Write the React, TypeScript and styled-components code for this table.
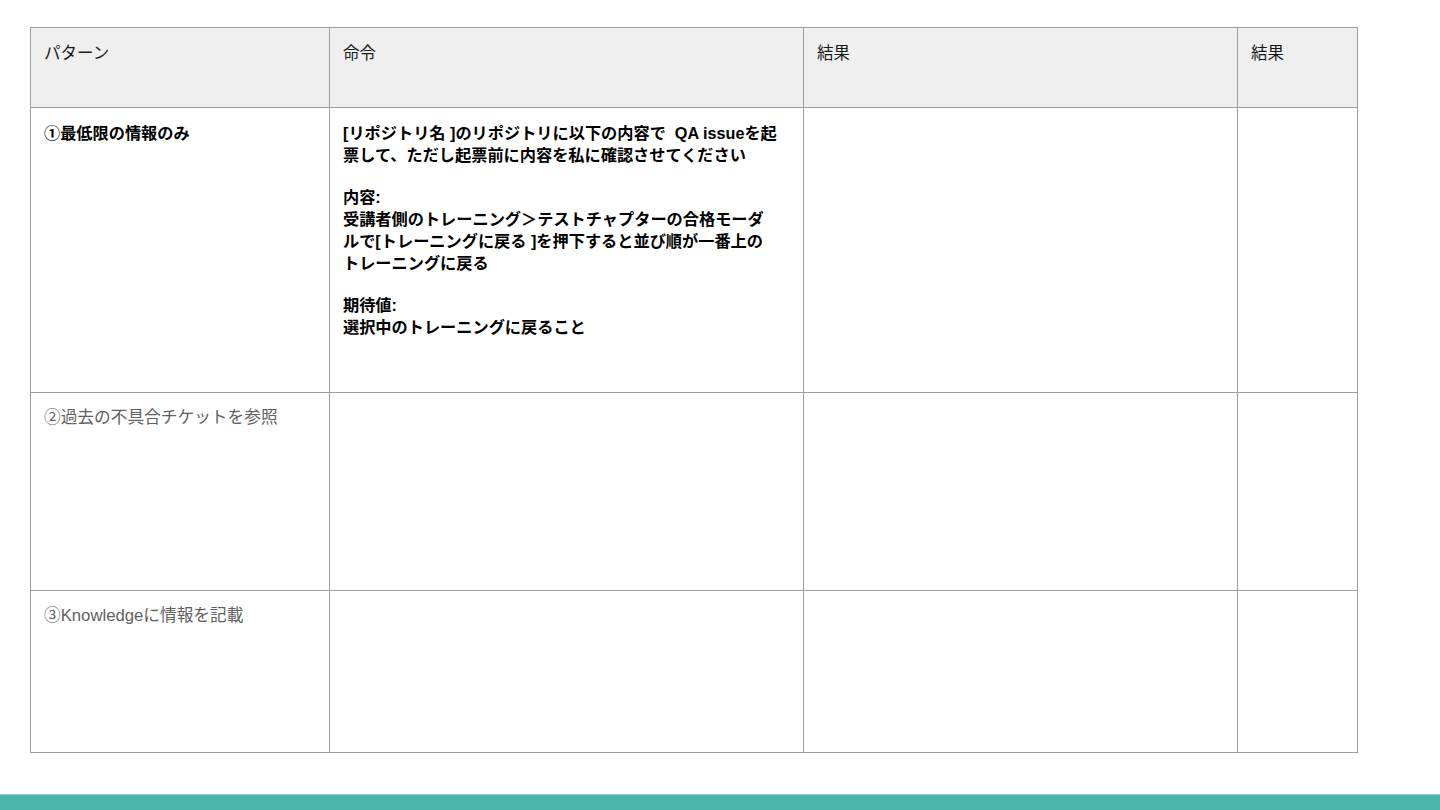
import React from "react";
import styled, { createGlobalStyle } from "styled-components";

const Global = createGlobalStyle`
  html, body { margin: 0; padding: 0; background: #ffffff; }
  body { font-family: "Liberation Sans", "Noto Sans CJK JP", sans-serif; }
  *, *::before, *::after { box-sizing: border-box; }
`;

const Page = styled.div`
  width: 1440px;
  height: 810px;
  display: flex;
  flex-direction: column;
  overflow: hidden;
`;

const Content = styled.div`
  flex: 1;
  padding: 27px 0 0 30px;
`;

const Table = styled.table`
  border-collapse: collapse;
  table-layout: fixed;
  width: 1327px;
`;

const Row = styled.tr<{ $h: number }>`
  height: ${(p) => p.$h}px;
`;

const HeadCell = styled.th<{ $w: number }>`
  width: ${(p) => p.$w}px;
  background: #efefef;
  border: 1.5px solid #9e9e9e;
  padding: 14px 13px;
  text-align: left;
  vertical-align: top;
  font-weight: 400;
  font-size: 16.5px;
  line-height: 22px;
  color: #1a1a1a;
`;

const Cell = styled.td<{ $tone?: "strong" | "muted" }>`
  border: 1.5px solid #9e9e9e;
  padding: 14px 13px;
  vertical-align: top;
  font-size: ${(p) => (p.$tone === "strong" ? 16.2 : 16.7)}px;
  line-height: 22px;
  font-weight: ${(p) => (p.$tone === "strong" ? 700 : 400)};
  color: ${(p) => (p.$tone === "muted" ? "#5f5f5f" : "#000000")};
  white-space: nowrap;
`;

const Gap = styled.div`
  height: 20px;
`;

const Footer = styled.div`
  height: 16px;
  background: #4db6ac;
  border-top: 1px solid #8fd2cb;
`;

export default function App() {
  return (
    <>
      <Global />
      <Page>
        <Content>
          <Table>
            <thead>
              <Row $h={80}>
                <HeadCell $w={299}>パターン</HeadCell>
                <HeadCell $w={474}>命令</HeadCell>
                <HeadCell $w={434}>結果</HeadCell>
                <HeadCell $w={120}>結果</HeadCell>
              </Row>
            </thead>
            <tbody>
              <Row $h={285}>
                <Cell $tone="strong">①最低限の情報のみ</Cell>
                <Cell $tone="strong">
                  [リポジトリ名 ]のリポジトリに以下の内容で&nbsp; QA issueを起
                  <br />
                  票して、ただし起票前に内容を私に確認させてください
                  <Gap />
                  内容:
                  <br />
                  受講者側のトレーニング＞テストチャプターの合格モーダ
                  <br />
                  ルで[トレーニングに戻る ]を押下すると並び順が一番上の
                  <br />
                  トレーニングに戻る
                  <Gap />
                  期待値:
                  <br />
                  選択中のトレーニングに戻ること
                </Cell>
                <Cell />
                <Cell />
              </Row>
              <Row $h={198}>
                <Cell $tone="muted">②過去の不具合チケットを参照</Cell>
                <Cell />
                <Cell />
                <Cell />
              </Row>
              <Row $h={162}>
                <Cell $tone="muted">③Knowledgeに情報を記載</Cell>
                <Cell />
                <Cell />
                <Cell />
              </Row>
            </tbody>
          </Table>
        </Content>
        <Footer />
      </Page>
    </>
  );
}
